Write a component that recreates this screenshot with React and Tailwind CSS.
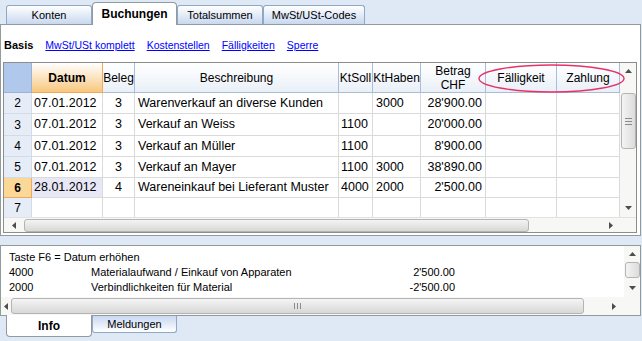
import React from "react";

const rows = [
  { n: "2", h: "h-[21px]", datum: "07.01.2012", beleg: "3", text: "Warenverkauf an diverse Kunden", soll: "", haben: "3000", betrag: "28'900.00" },
  { n: "3", h: "h-[22px]", datum: "07.01.2012", beleg: "3", text: "Verkauf an Weiss", soll: "1100", haben: "", betrag: "20'000.00" },
  { n: "4", h: "h-[21px]", datum: "07.01.2012", beleg: "3", text: "Verkauf an Müller", soll: "1100", haben: "", betrag: "8'900.00" },
  { n: "5", h: "h-[21px]", datum: "07.01.2012", beleg: "3", text: "Verkauf an Mayer", soll: "1100", haben: "3000", betrag: "38'890.00" },
  { n: "6", h: "h-[20px]", datum: "28.01.2012", beleg: "4", text: "Wareneinkauf bei Lieferant Muster", soll: "4000", haben: "2000", betrag: "2'500.00", sel: true },
  { n: "7", h: "h-[21px]", datum: "", beleg: "", text: "", soll: "", haben: "", betrag: "" },
];

const Arrow = ({ dir }) => {
  const pts = {
    up: "0,4 3.5,0 7,4",
    down: "0,0 3.5,4 7,0",
    left: "4,0 0,3.5 4,7",
    right: "0,0 4,3.5 0,7",
  }[dir];
  const vert = dir === "up" || dir === "down";
  return (
    <svg width={vert ? 7 : 4} height={vert ? 4 : 7} viewBox={vert ? "0 0 7 4" : "0 0 4 7"}>
      <polygon points={pts} fill="#4d4d4d" />
    </svg>
  );
};

const Tab = ({ label, w, active }) =>
  active ? (
    <div className={`${w} h-[23px] -mb-px relative z-10 rounded-t-[4px] border border-b-0 border-[#919b9c] bg-white flex items-center justify-center text-[12px] font-bold text-black`}>
      {label}
    </div>
  ) : (
    <div className={`${w} h-[19px] rounded-t-[3px] border border-b-0 border-[#91a7c6] bg-linear-to-b from-white to-[#c8d8f0] flex items-center justify-center text-[11px] text-black`}>
      {label}
    </div>
  );

const HeadCell = ({ w, children, className = "" }) => (
  <div className={`${w} shrink-0 h-full border-r border-b border-[#a9bdd6] bg-linear-to-b from-white to-[#eaf0f8] flex items-center justify-center text-center text-[12px] leading-[14px] ${className}`}>
    {children}
  </div>
);

const Cell = ({ w, children, className = "" }) => (
  <div className={`${w} shrink-0 h-full border-r border-b border-[#dadada] flex items-center whitespace-nowrap overflow-hidden ${className}`}>
    {children}
  </div>
);

export default function App() {
  return (
    <div className="relative w-[642px] h-[341px] overflow-hidden bg-[#dfe8f5] text-black" style={{ fontFamily: '"Liberation Sans", Arial, sans-serif' }}>
      {/* top tabs */}
      <div className="flex items-end h-[24px] pl-[6px]">
        <Tab label="Konten" w="w-[86px]" />
        <Tab label="Buchungen" w="w-[85px]" active />
        <Tab label="Totalsummen" w="w-[86px]" />
        <Tab label="MwSt/USt-Codes" w="w-[102px]" />
      </div>

      {/* main panel */}
      <div className="w-[641px] h-[212px] border border-[#919b9c] bg-white flex flex-col">
        <div className="h-[37px] flex items-center gap-[12px] pl-[3px] pt-[4px] text-[10.5px]">
          <span className="font-bold text-[11px]">Basis</span>
          <span className="text-[#0000ff] underline">MwSt/USt komplett</span>
          <span className="text-[#0000ff] underline">Kostenstellen</span>
          <span className="text-[#0000ff] underline">Fälligkeiten</span>
          <span className="text-[#0000ff] underline">Sperre</span>
        </div>

        {/* grid */}
        <div className="ml-[2px] w-[634px] h-[171px] border border-[#8c8c8c] flex flex-col">
          <div className="flex h-[154px]">
            <div className="w-[616px] overflow-hidden">
              <div className="flex h-[30px]">
                <div className="w-[28px] shrink-0 h-full bg-[#b0c8ec] border-r border-b border-[#9db3d4]" />
                <HeadCell w="w-[71px]" className="font-bold bg-linear-to-b from-[#fbe5ae] to-[#f7c77c] border-[#f0a85a]">Datum</HeadCell>
                <HeadCell w="w-[32px]">Beleg</HeadCell>
                <HeadCell w="w-[204px]">Beschreibung</HeadCell>
                <HeadCell w="w-[34px]">KtSoll</HeadCell>
                <HeadCell w="w-[48px]">KtHaben</HeadCell>
                <HeadCell w="w-[65px]">Betrag<br />CHF</HeadCell>
                <HeadCell w="w-[71px]">Fälligkeit</HeadCell>
                <HeadCell w="w-[63px]">Zahlung</HeadCell>
              </div>
              {rows.map((r) => (
                <div key={r.n} className={`flex ${r.h} text-[12.5px]`}>
                  <div
                    className={`w-[28px] shrink-0 h-full border-r border-b flex items-center justify-center text-[12px] ${
                      r.sel ? "bg-[#fcd898] border-[#f0a85a] font-bold" : "bg-[#e6edf7] border-[#d2dbe8]"
                    }`}
                  >
                    {r.n}
                  </div>
                  <Cell w="w-[71px]" className={`pl-[2px] ${r.sel ? "bg-[#e7e7f6]" : ""}`}>{r.datum}</Cell>
                  <Cell w="w-[32px]" className="justify-center">{r.beleg}</Cell>
                  <Cell w="w-[204px]" className="pl-[3px]">{r.text}</Cell>
                  <Cell w="w-[34px]" className="pl-[2px]">{r.soll}</Cell>
                  <Cell w="w-[48px]" className="pl-[3px]">{r.haben}</Cell>
                  <Cell w="w-[65px]" className="justify-end pr-[3px]">{r.betrag}</Cell>
                  <Cell w="w-[71px]" />
                  <Cell w="w-[63px]" />
                </div>
              ))}
            </div>
            {/* vertical scrollbar */}
            <div className="w-[16px] h-full bg-[#f7f7f5] flex flex-col items-center">
              <div className="h-[16px] flex items-center justify-center"><Arrow dir="up" /></div>
              <div className="mt-[14px] w-[15px] h-[56px] rounded-[3px] border border-[#b4b4b4] bg-linear-to-r from-[#f4f4f4] to-[#dcdcdc] flex flex-col items-center justify-center gap-[2px]">
                <div className="w-[7px] h-px bg-[#8a8a8a]" />
                <div className="w-[7px] h-px bg-[#8a8a8a]" />
                <div className="w-[7px] h-px bg-[#8a8a8a]" />
              </div>
              <div className="flex-1" />
              <div className="h-[18px] flex items-center justify-center"><Arrow dir="down" /></div>
            </div>
          </div>
          {/* horizontal scrollbar */}
          <div className="flex h-[15px] bg-[#f7f7f5] border-t border-[#e2e2e2]">
            <div className="w-[616px] flex items-center">
              <div className="w-[20px] flex justify-center"><Arrow dir="left" /></div>
              <div className="w-[505px] h-[13px] rounded-[3px] border border-[#b4b4b4] bg-linear-to-b from-[#f4f4f4] to-[#d8d8d8]" />
              <div className="flex-1 flex justify-end pr-[7px]"><Arrow dir="right" /></div>
            </div>
            <div className="w-[16px]" />
          </div>
        </div>
      </div>

      {/* info panel */}
      <div className="mt-[9px] w-[641px] h-[71px] border border-[#919b9c] bg-white flex flex-col">
        <div className="flex h-[51px]">
          <div className="flex-1 pt-[4px] pl-[8px] text-[11px] leading-[15px]">
            <div>Taste F6 = Datum erhöhen</div>
            <div className="flex">
              <span className="w-[82px]">4000</span>
              <span className="w-[290px]">Materialaufwand / Einkauf von Apparaten</span>
              <span className="w-[74px] text-right">2'500.00</span>
            </div>
            <div className="flex">
              <span className="w-[82px]">2000</span>
              <span className="w-[290px]">Verbindlichkeiten für Material</span>
              <span className="w-[74px] text-right">-2'500.00</span>
            </div>
          </div>
          <div className="w-[16px] h-full bg-[#f7f7f5] flex flex-col items-center">
            <div className="h-[16px] flex items-center justify-center"><Arrow dir="up" /></div>
            <div className="w-[15px] h-[16px] rounded-[3px] border border-[#b4b4b4] bg-linear-to-r from-[#f4f4f4] to-[#dcdcdc]" />
            <div className="flex-1 flex items-center justify-center"><Arrow dir="down" /></div>
          </div>
        </div>
        <div className="flex h-[18px] bg-[#f7f7f5]">
          <div className="w-[10px] flex justify-center items-center"><Arrow dir="left" /></div>
          <div className="w-[573px] h-[16px] mt-px rounded-[3px] border border-[#b4b4b4] bg-linear-to-b from-[#f4f4f4] to-[#d8d8d8] flex items-center justify-center gap-[2px]">
            <div className="w-px h-[6px] bg-[#8a8a8a]" />
            <div className="w-px h-[6px] bg-[#8a8a8a]" />
            <div className="w-px h-[6px] bg-[#8a8a8a]" />
          </div>
          <div className="flex-1 flex items-center justify-end pr-[24px]"><Arrow dir="right" /></div>
        </div>
      </div>

      {/* bottom tabs */}
      <div className="flex items-start pl-[6px]">
        <div className="w-[86px] h-[22px] -mt-px relative z-10 rounded-b-[4px] border border-t-0 border-[#919b9c] bg-white flex items-center justify-center text-[12px] font-bold">
          Info
        </div>
        <div className="w-[85px] h-[17px] rounded-b-[3px] border border-t-0 border-[#91a7c6] bg-linear-to-b from-[#c8d8f0] to-white flex items-center justify-center text-[11px]">
          Meldungen
        </div>
      </div>

      {/* highlight ellipse */}
      <svg className="absolute left-0 top-0 pointer-events-none" width="642" height="341">
        <ellipse cx="551.5" cy="78.5" rx="72.5" ry="13.5" fill="none" stroke="#e5336a" strokeWidth="1.4" />
      </svg>
    </div>
  );
}
